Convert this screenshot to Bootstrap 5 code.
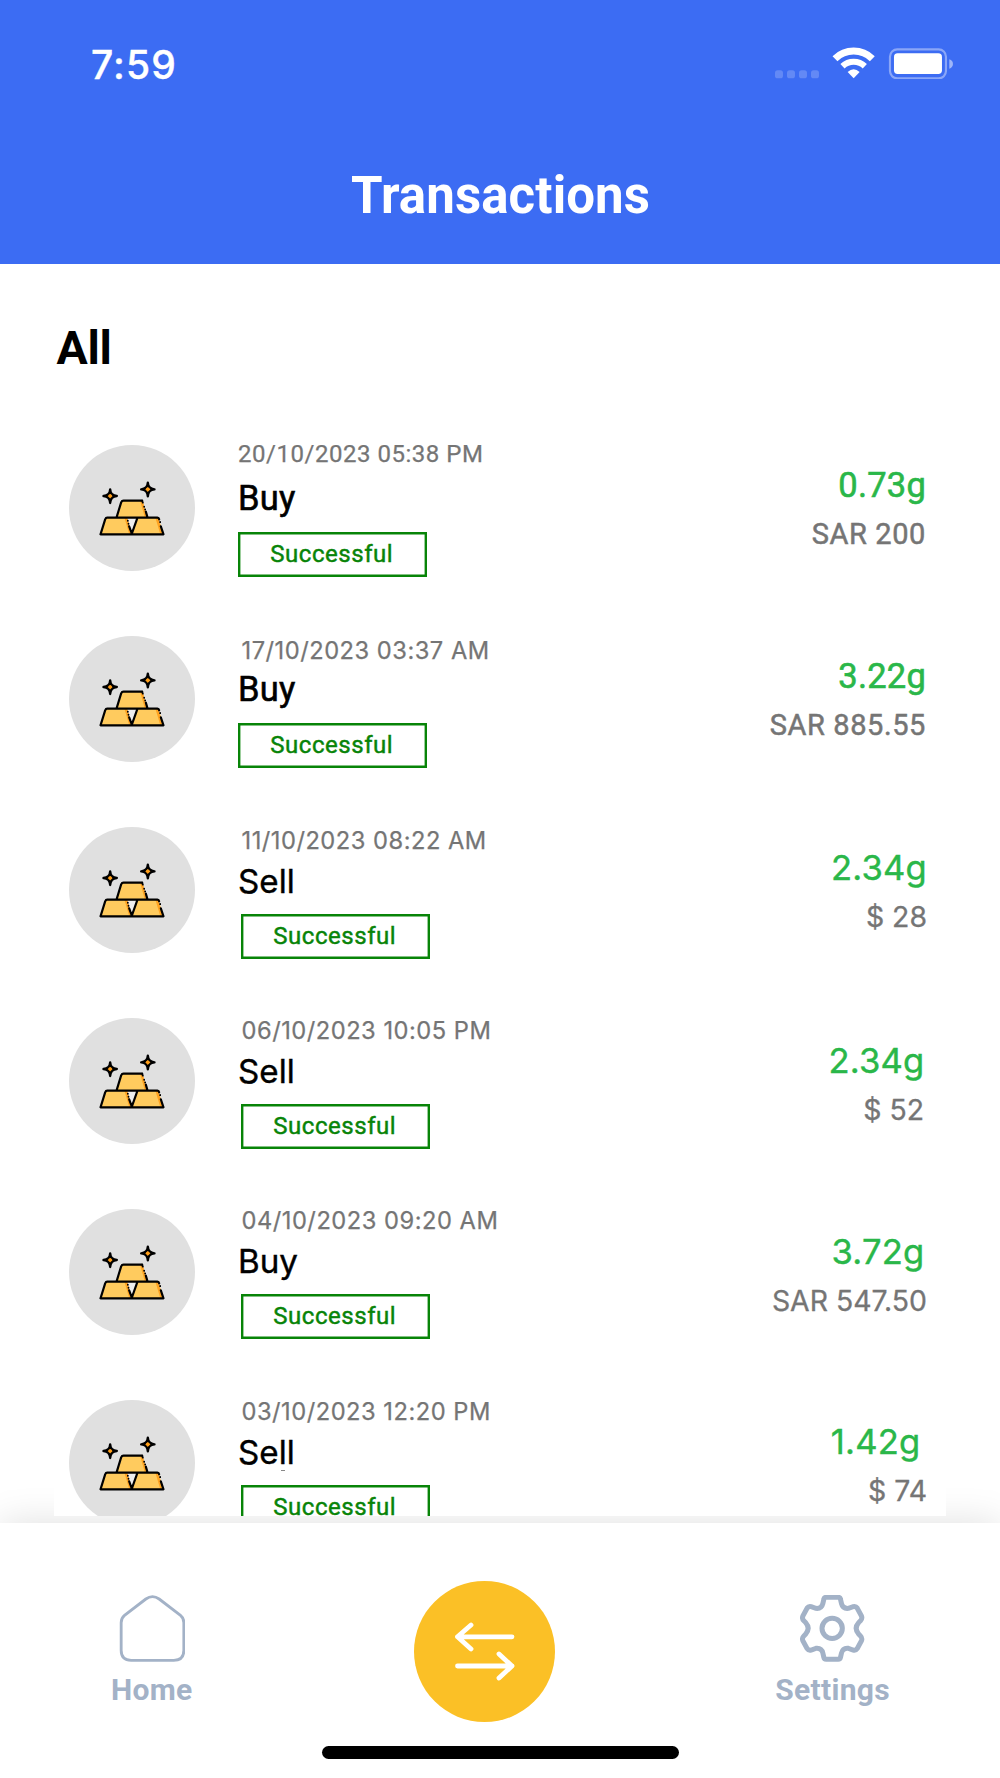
<!DOCTYPE html>
<html lang="en">
<head>
<meta charset="utf-8">
<meta name="viewport" content="width=device-width, initial-scale=1">
<title>Transactions</title>
<link href="https://cdn.jsdelivr.net/npm/bootstrap@5.3.0/dist/css/bootstrap.min.css" rel="stylesheet">
<style>
  body { font-family: Roboto, "Liberation Sans", sans-serif; height: 1778px; overflow: hidden; color: #000; background: #fff; }
  .screen { width: 1000px; height: 1778px; }
  .app-head { height: 264px; background: #3c6cf3; padding-top: 40px; }
  .status-bar { height: 48px; padding: 0 47px 0 91px; }
  .clock { font: 500 39px/49px Inter, sans-serif; letter-spacing: 1.1px; -webkit-text-stroke: .4px; }
  .status-icons { width: 178.3px; height: 32.7px; margin-top: 6.7px; }
  .head-title { font-size: 51px; line-height: 60px; letter-spacing: .1px; margin: 77.5px 0 0 1px; }
  .section-title { font-size: 46.5px; line-height: 56px; letter-spacing: -.3px; margin: 56px 0 24px 56.5px; }
  .tx-list { height: 1116px; margin: 0 54px; padding: 45px 20px 0 15px; background: #fff; }
  .tx { height: 191px; --d: 0px; --n: 5px; --b: 14px; --g: 20px; --gr: 0px; --sr: 0px; }
  .coin { width: 126px; height: 126px; background: #e0e0e0; }
  .tx-info { margin-left: 43px; }
  .tx-date { font-size: 24px; line-height: 28px; letter-spacing: .52px; color: #757575; margin-top: var(--d); -webkit-text-stroke: .25px; }
  .tx-kind { font-size: 34.5px; line-height: 40px; letter-spacing: .3px; margin-top: var(--n); -webkit-text-stroke: .6px; }
  .tx-state { width: 188.5px; height: 44.5px; padding: 1.5px 1px 0 0; box-shadow: inset 0 0 0 2.4px #088408; color: #088408; font-size: 24px; line-height: 40px; letter-spacing: .55px; margin-top: var(--b); -webkit-text-stroke: .45px; }
  .tx-sum { padding-top: var(--g); }
  .tx-grams { font-size: 34.5px; line-height: 41px; letter-spacing: .2px; color: #2ab749; margin-right: var(--gr); -webkit-text-stroke: .6px; }
  .tx-money { font-size: 29px; line-height: 34px; letter-spacing: .6px; color: #757575; margin: 11px var(--sr) 0 0; -webkit-text-stroke: .5px; }
  .date-alt .tx-date, .alt .tx-date { font-family: Inter, sans-serif; font-size: 23.7px; padding-left: 3.5px; letter-spacing: .5px; }
  .alt .tx-kind { font-family: Inter, sans-serif; font-size: 33.2px; line-height: 42px; margin-bottom: -2px; letter-spacing: 0; -webkit-text-stroke: .4px; }
  .alt .tx-state { margin-left: 3px; }
  .alt .tx-grams { font-family: Inter, sans-serif; font-size: 34.6px; letter-spacing: .2px; -webkit-text-stroke: .4px; }
  .alt .tx-money { font-family: Inter, sans-serif; font-size: 28.4px; line-height: 36px; letter-spacing: 0; -webkit-text-stroke: .3px; }
  .tx:nth-child(1) { --d: -5px; --n: 10px; }
  .tx:nth-child(2) { --d: .5px; --n: 4.5px; --b: 14px; }
  .tx:nth-child(3) { --gr: -1px; --sr: -1px; }
  .tx:nth-child(4) { --d: -1px; --g: 22px; --gr: 1.5px; --sr: 2px; }
  .tx:nth-child(5) { --d: -2px; --g: 22px; --gr: 1.5px; --sr: -1px; }
  .tx:nth-child(6) { --d: -2px; --g: 21px; --gr: 5.5px; --sr: -1px; }
  .tick { left: 227px; top: 1070px; width: 4px; height: 1px; background: #888; }
  .tab-bar { height: 255px; margin-top: 7px; padding: 0 110px 0 111px; background: #fff; box-shadow: 0 0 36px rgba(0,0,0,.13); }
  .tab-item { margin-top: 72px; color: #a3b2c7; font-size: 30px; line-height: 36px; letter-spacing: .3px; }
  .tab-item svg { width: 66px; height: 66.7px; margin-bottom: 10.3px; }
  .swap { width: 141px; height: 141px; margin: 57.5px -1px 0 1px; background: #fbc026; }
  .home-line { left: 322px; top: 1746px; width: 357px; height: 13px; background: #000; }
</style>
</head>
<body>
<div class="screen d-flex flex-column">
  <header class="app-head text-white">
    <div class="status-bar d-flex justify-content-between align-items-start">
      <div class="clock">7:59</div>
      <svg class="status-icons" viewBox="105 80 535 98" fill="none">
        <g fill="#fff" fill-opacity=".2"><rect x="105" y="150" width="24" height="24" rx="8"/><rect x="141" y="150" width="24" height="24" rx="8"/><rect x="177" y="150" width="24" height="24" rx="8"/><rect x="213" y="150" width="24" height="24" rx="8"/></g>
        <path d="M285 115A80 80 0 0 1 397 115" stroke="#fff" stroke-width="21"/>
        <path d="M307.5 137.7A48 48 0 0 1 374.5 137.7" stroke="#fff" stroke-width="18"/>
        <path d="M341 174L323 155Q341 138 359 155Z" fill="#fff"/>
        <rect x="450" y="87" width="168" height="87" rx="22" stroke="#fff" stroke-opacity=".4" stroke-width="6.5"/>
        <rect x="462" y="99" width="144" height="62" rx="11" fill="#fff"/>
        <path d="M628 117Q639 121 639 131T628 145Z" fill="#fff" fill-opacity=".5"/>
      </svg>
    </div>
    <h1 class="head-title text-center fw-bold">Transactions</h1>
  </header>

  <h2 class="section-title fw-bold">All</h2>

  <main class="tx-list position-relative z-1 overflow-hidden" id="list"></main>

  <nav class="tab-bar d-flex justify-content-between align-items-start flex-shrink-0">
    <div class="tab-item d-flex flex-column align-items-center fw-bold">
      <svg viewBox="237.5 645 198 200" fill="none" stroke="currentColor" stroke-width="8.5"><path d="M244 728Q244 714 254 706L318 657Q338 643 358 657L422 706Q432 714 432 728V811Q432 841 402 841H274Q244 841 244 811Z"/></svg>
      <span>Home</span>
    </div>
    <div class="swap rounded-circle">
      <svg width="141" height="141" viewBox="0 0 141 141" fill="none" stroke="#fff" stroke-width="4.8" stroke-linecap="round" stroke-linejoin="round"><path d="M98 55.8H43.5M57 44L43.5 55.8L57 68M43.5 85H98M85 73L98 85L85 97"/></svg>
    </div>
    <div class="tab-item d-flex flex-column align-items-center fw-bold">
      <svg viewBox="59.5 45 198 200" fill="none" stroke="currentColor" stroke-width="15"><path d="M138 52H174Q180 52 181 58L184 71Q188 87 205 85L219 80Q227 78 231 84L244 108Q247 116 241 122L236 127Q220 145 236 163L241 168Q247 174 244 182L231 206Q227 212 219 210L205 205Q188 203 184 219L181 232Q180 238 174 238H138Q132 238 131 232L128 219Q124 203 107 205L93 210Q85 212 81 206L68 182Q65 174 71 168L76 163Q92 145 76 127L71 122Q65 116 68 108L81 84Q85 78 93 80L107 85Q124 87 128 71L131 58Q132 52 138 52Z"/><circle cx="156" cy="145" r="30.5"/></svg>
      <span>Settings</span>
    </div>
  </nav>
  <div class="home-line position-absolute rounded-pill"></div>
</div>
<template id="row">
  <article class="tx d-flex align-items-start">
    <div class="coin rounded-circle flex-shrink-0">
      <svg class="d-block" width="126" height="126" viewBox="-61.5 -76 378 378" stroke-linejoin="round" stroke-linecap="round">
        <g fill="#ffcb5e">
          <path d="M99 91H158L174 142H82Z"/><path d="M51 142H112L126 192H33Z"/><path d="M144 142H206L222 192H127Z"/>
        </g>
        <g fill="#ffa321">
          <path d="M152 92H160L173 141H166Z"/><path d="M105 143H114L127 190H119Z"/><path d="M198 143H207L221 190H212Z"/>
        </g>
        <path d="M114 143H142L127 185Z" fill="#eee"/>
        <g fill="none" stroke="#000" stroke-width="6.5">
          <path d="M158 91H102Q97 91 95 96L81 142H204Q208 142 209 147M81 142H53Q49 142 47 147L33 192H222L214 168M144 142L127 190L119 168M174 141L169 124"/>
          <path d="M158 91L160 97M164 109V109.5M167 117V117.5M212 155V155.5M115 151V151.5M117 160V160.5" stroke-width="5.5"/>
        </g>
        <g fill="#ff9f1a" stroke="#000" stroke-width="6.5">
          <path d="M62 57Q63 76 82 77Q63 78 62 98Q61 78 42 77Q61 76 62 57Z" stroke-width="7"/><circle cx="62" cy="77" r="5.5" stroke="none"/>
          <path d="M175 37Q176 56 195 57Q176 58 175 78Q174 58 155 57Q174 56 175 37Z" stroke-width="7"/><circle cx="175" cy="57" r="5.5" stroke="none"/>
        </g>
      </svg>
    </div>
    <div class="tx-info">
      <div class="tx-date"></div>
      <div class="tx-kind"></div>
      <div class="tx-state text-center">Successful</div>
    </div>
    <div class="tx-sum ms-auto text-end">
      <div class="tx-grams"></div>
      <div class="tx-money"></div>
    </div>
  </article>
</template>
<script src="https://cdn.jsdelivr.net/npm/bootstrap@5.3.0/dist/js/bootstrap.bundle.min.js"></script>
<script>
  const rows = [
    ['20/10/2023 05:38 PM', 'Buy', '0.73g', 'SAR 200', ''],
    ['17/10/2023 03:37 AM', 'Buy', '3.22g', 'SAR 885.55', 'date-alt'],
    ['11/10/2023 08:22 AM', 'Sell', '2.34g', '$ 28', 'alt'],
    ['06/10/2023 10:05 PM', 'Sell', '2.34g', '$ 52', 'alt'],
    ['04/10/2023 09:20 AM', 'Buy', '3.72g', 'SAR 547.50', 'alt'],
    ['03/10/2023 12:20 PM', 'Sell', '1.42g', '$ 74', 'alt']
  ];
  const list = document.getElementById('list');
  for (const [date, kind, grams, money, cls] of rows) {
    const tx = document.getElementById('row').content.cloneNode(true).firstElementChild;
    if (cls) tx.classList.add(cls);
    tx.querySelector('.tx-date').textContent = date;
    tx.querySelector('.tx-kind').textContent = kind;
    tx.querySelector('.tx-grams').textContent = grams;
    tx.querySelector('.tx-money').textContent = money;
    list.append(tx);
  }
  const tick = document.createElement('i');
  tick.className = 'tick position-absolute';
  list.append(tick);
</script>
</body>
</html>
